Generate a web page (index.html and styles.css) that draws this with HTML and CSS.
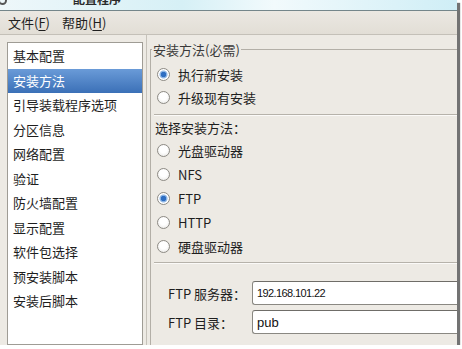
FILE: index.html
```html
<!DOCTYPE html>
<html lang="zh-CN">
<head>
  <meta charset="UTF-8" />
  <title>Kickstart 配置程序</title>
  <link rel="stylesheet" href="styles.css">
</head>
<body>

<div class="window">
  <div class="titlebar">
    <span class="titlebar__icon"></span>
    <span class="titlebar__text">配置程序</span>
  </div>

  <nav class="menubar">
    <span class="menubar__item">文件(<u>F</u>)</span>
    <span class="menubar__item">帮助(<u>H</u>)</span>
  </nav>

  <div class="content">
    <ul class="sidebar">
      <li class="sidebar__item">基本配置</li>
      <li class="sidebar__item sidebar__item--active">安装方法</li>
      <li class="sidebar__item">引导装载程序选项</li>
      <li class="sidebar__item">分区信息</li>
      <li class="sidebar__item">网络配置</li>
      <li class="sidebar__item">验证</li>
      <li class="sidebar__item">防火墙配置</li>
      <li class="sidebar__item">显示配置</li>
      <li class="sidebar__item">软件包选择</li>
      <li class="sidebar__item">预安装脚本</li>
      <li class="sidebar__item">安装后脚本</li>
    </ul>

    <div class="pane">
      <fieldset class="group">
        <legend class="group__title">安装方法(必需)</legend>

        <label class="radio"><input type="radio" name="mode" checked><span>执行新安装</span></label>
        <label class="radio"><input type="radio" name="mode"><span>升级现有安装</span></label>

        <hr class="group__sep">

        <div class="group__label">选择安装方法：</div>
        <label class="radio radio--tall"><input type="radio" name="source"><span>光盘驱动器</span></label>
        <label class="radio radio--tall"><input type="radio" name="source"><span>NFS</span></label>
        <label class="radio radio--tall"><input type="radio" name="source" checked><span>FTP</span></label>
        <label class="radio radio--tall"><input type="radio" name="source"><span>HTTP</span></label>
        <label class="radio radio--tall"><input type="radio" name="source"><span>硬盘驱动器</span></label>

        <hr class="group__sep group__sep--low">

        <div class="fields">
          <label class="fields__label">FTP 服务器：</label>
          <input class="fields__input fields__input--ip" type="text" value="192.168.101.22">
          <label class="fields__label">FTP 目录：</label>
          <input class="fields__input" type="text" value="pub">
        </div>
      </fieldset>
    </div>
  </div>
</div>

</body>
</html>
```

FILE: styles.css
```css
* {
  box-sizing: border-box;
}
html, body {
  overflow: hidden;
}
body {
  margin: 0;
  background: #fff;
  font-family: "Noto Sans CJK SC", "DejaVu Sans", sans-serif;
  font-size: 13px;
  color: #1e1e1e;
}

.window {
  width: 457px;
  height: 345px;
  background: #edeae4;
  display: flex;
  flex-direction: column;
  overflow: hidden;
  box-shadow: 3px 3px 1px rgba(0, 0, 0, 0.55);
}

.titlebar {
  height: 11px;
  flex: none;
  display: flex;
  align-items: flex-start;
  overflow: hidden;
  background: linear-gradient(to right, #eef7fa, #d6f0f6 40%, #f2fafc 60%, #cfeef6);
  border-bottom: 1px solid #74868b;
}
.titlebar__icon {
  width: 9px;
  height: 9px;
  margin-left: -2px;
  border: 2px solid #555;
  border-radius: 50%;
  transform: translateY(-4px);
}
.titlebar__text {
  display: block;
  margin-left: 66px;
  font-weight: bold;
  font-size: 12px;
  line-height: 17px;
  color: #2a2a2a;
  transform: translateY(-10px);
}

.menubar {
  height: 24px;
  flex: none;
  display: flex;
  align-items: center;
  gap: 12px;
  padding-left: 8px;
  background: linear-gradient(#ebe8e2, #e2ded6);
  border-bottom: 1px solid #c4c0b8;
}
.menubar__item u {
  text-underline-offset: 2px;
}

.content {
  flex: 1;
  display: flex;
  min-height: 0;
}

.sidebar {
  list-style: none;
  margin: 7px 0 0 7px;
  padding: 1px 0 0;
  width: 136px;
  flex: none;
  background: #fff;
  border: 1px solid #9f9c95;
}
.sidebar__item {
  height: 24.5px;
  line-height: 24.5px;
  padding-left: 5px;
  white-space: nowrap;
}
.sidebar__item--active {
  background: linear-gradient(#6a9bd8, #3b70b7);
  color: #fff;
}

.pane {
  flex: 1;
  min-width: 0;
  margin-left: 3px;
  padding: 6px 0 0 3px;
  border-left: 1px solid #c6c2ba;
  display: flex;
  flex-direction: column;
}

.group {
  flex: 1;
  margin: 0;
  padding: 5px 0 0;
  border: 1px solid #b3afa7;
  border-right: none;
  border-bottom: none;
  min-width: 0;
}
.group__title {
  margin-left: 1px;
  padding: 0 1px;
  line-height: 17px;
  color: #3a3a3a;
}

.radio {
  display: flex;
  align-items: center;
  gap: 8px;
  height: 23px;
  padding-left: 6px;
}
.radio--tall {
  height: 24px;
}
.radio input {
  appearance: none;
  -webkit-appearance: none;
  margin: 0;
  width: 13px;
  height: 13px;
  border: 1px solid #8d8b85;
  border-radius: 50%;
  background: radial-gradient(circle at 50% 40%, #fff 40%, #e4e3df);
}
.radio input:checked {
  background: radial-gradient(circle, #2e6ec2 0 2.5px, #8db5e4 3px 3.5px, #fff 4.5px);
}

.group__sep {
  margin: 5px 0 0 3px;
  height: 2px;
  border: none;
  border-top: 1px solid #b6b2aa;
  border-bottom: 1px solid #fbfaf8;
}
.group__sep--low {
  margin-top: 4px;
}

.group__label {
  margin-top: 2px;
  padding-left: 4px;
  height: 20px;
  line-height: 20px;
}

.fields {
  display: grid;
  grid-template-columns: 84px minmax(0, 1fr);
  row-gap: 5px;
  margin-top: 17px;
  padding-left: 17px;
  align-items: center;
}
.fields__label {
  white-space: nowrap;
}
.fields__input {
  height: 24px;
  width: 100%;
  margin: 0;
  padding: 0 0 0 4px;
  border: 1px solid #8a8882;
  border-top-color: #6f6d68;
  border-right: none;
  border-radius: 3px 0 0 3px;
  background: #fff;
  font-family: "Liberation Sans", "DejaVu Sans", sans-serif;
  font-size: 13px;
  color: #111;
}
.fields__input--ip {
  font-size: 11px;
  letter-spacing: -0.6px;
}
```
